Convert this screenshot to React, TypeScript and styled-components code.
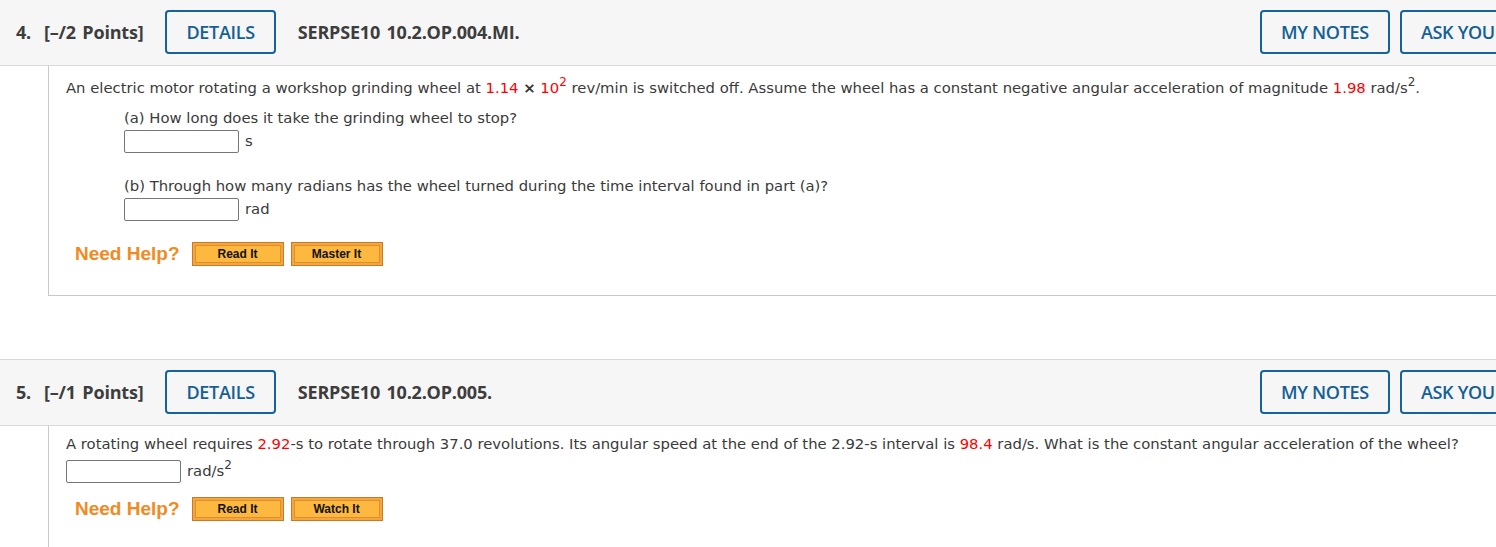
import React from "react";
import styled, { createGlobalStyle } from "styled-components";

const GlobalStyle = createGlobalStyle`
  html, body {
    margin: 0;
    padding: 0;
    background: #ffffff;
    overflow: hidden;
  }
  body {
    font-family: "DejaVu Sans", Verdana, sans-serif;
    color: #3a3a3a;
  }
`;

const Page = styled.div`
  width: 1496px;
  height: 547px;
  overflow: hidden;
`;

const Question = styled.section<{ $gap?: boolean }>`
  margin-top: ${(p) => (p.$gap ? "63px" : "0")};
`;

const Header = styled.div<{ $topLine?: boolean }>`
  display: flex;
  align-items: center;
  height: 44px;
  padding: 10px 0 11px 16px;
  background: #f6f6f6;
  border-top: ${(p) => (p.$topLine ? "1px solid #d9d9d9" : "none")};
  border-bottom: 1px solid #d9d9d9;
  font-family: "Open Sans", "Noto Sans", sans-serif;
  white-space: nowrap;
`;

const Title = styled.span`
  font-size: 18px;
  font-weight: 700;
  color: #3d3d3d;
  letter-spacing: -0.2px;
  word-spacing: 2px;
`;

const OutlineButton = styled.button`
  box-sizing: border-box;
  height: 44px;
  padding: 0 19px;
  border: 2px solid #15639c;
  border-radius: 4px;
  background: #f6f6f6;
  color: #135f96;
  font-family: "Open Sans", "Noto Sans", sans-serif;
  font-size: 18px;
  font-weight: 600;
  letter-spacing: -0.3px;
  flex-shrink: 0;
`;

const DetailsButton = styled(OutlineButton)`
  margin: 0 22px 0 22px;
`;

const Spacer = styled.div`
  flex: 1;
`;

const RightButtons = styled.div`
  display: flex;
  gap: 10px;
  margin-right: -112px;
`;

const Body = styled.div<{ $height: number; $top: number; $bottomLine?: boolean }>`
  height: ${(p) => p.$height}px;
  margin-left: 48px;
  padding: ${(p) => p.$top}px 0 0 17px;
  border-left: 1px solid #c8c8c8;
  border-bottom: ${(p) => (p.$bottomLine ? "1px solid #c8c8c8" : "none")};
  font-size: 14.8px;
  line-height: 22px;
`;

const Line = styled.div`
  white-space: nowrap;
`;

const Red = styled.span`
  color: #ff0000;
`;

const Times = styled.span`
  font-weight: 700;
  color: #333;
`;

const Sup = styled.sup`
  font-size: 12px;
  line-height: 0;
  vertical-align: 7px;
`;

const Part = styled.div<{ $top: number }>`
  margin-left: 58px;
  margin-top: ${(p) => p.$top}px;
`;

const AnswerRow = styled.div<{ $top?: number }>`
  display: flex;
  align-items: center;
  gap: 6px;
  margin-top: ${(p) => p.$top ?? 0}px;
  height: 24px;
`;

const AnswerInput = styled.input`
  box-sizing: border-box;
  width: 115px;
  height: 23px;
  border: 1px solid #767676;
  border-radius: 2px;
  background: #fff;
  margin: 0;
`;

const Unit = styled.span`
  font-size: 14.8px;
`;

const HelpRow = styled.div<{ $top: number }>`
  display: flex;
  align-items: center;
  margin: ${(p) => p.$top}px 0 0 9px;
  gap: 7px;
`;

const NeedHelp = styled.span`
  font-family: "Liberation Sans", Arial, sans-serif;
  font-size: 19px;
  font-weight: 700;
  color: #f28a1f;
  margin-right: 5px;
`;

const HelpButton = styled.button`
  box-sizing: border-box;
  width: 92px;
  height: 24px;
  padding: 0;
  border: 1px solid #c67a2a;
  background: #fdb840;
  box-shadow: inset 0 0 0 2px #f5a53a, inset 0 0 0 3px #dc8f2c;
  font-family: "Liberation Sans", Arial, sans-serif;
  font-size: 12px;
  font-weight: 700;
  color: #111;
`;

export default function App() {
  return (
    <Page>
      <GlobalStyle />
      <Question>
        <Header>
          <Title>4.&nbsp; [–/2 Points]</Title>
          <DetailsButton>DETAILS</DetailsButton>
          <Title>SERPSE10 10.2.OP.004.MI.</Title>
          <Spacer />
          <RightButtons>
            <OutlineButton>MY NOTES</OutlineButton>
            <OutlineButton>ASK YOUR TEACHER</OutlineButton>
          </RightButtons>
        </Header>
        <Body $height={218} $top={11} $bottomLine>
          <Line>
            An electric motor rotating a workshop grinding wheel at <Red>1.14</Red> <Times>×</Times>{" "}
            <Red>
              10<Sup>2</Sup>
            </Red>{" "}
            rev/min is switched off. Assume the wheel has a constant negative angular acceleration of
            magnitude <Red>1.98</Red> rad/s<Sup>2</Sup>.
          </Line>
          <Part $top={8}>
            <Line>(a) How long does it take the grinding wheel to stop?</Line>
            <AnswerRow>
              <AnswerInput type="text" />
              <Unit>s</Unit>
            </AnswerRow>
          </Part>
          <Part $top={22}>
            <Line>(b) Through how many radians has the wheel turned during the time interval found in part (a)?</Line>
            <AnswerRow>
              <AnswerInput type="text" />
              <Unit>rad</Unit>
            </AnswerRow>
          </Part>
          <HelpRow $top={21}>
            <NeedHelp>Need Help?</NeedHelp>
            <HelpButton>Read It</HelpButton>
            <HelpButton>Master It</HelpButton>
          </HelpRow>
        </Body>
      </Question>
      <Question $gap>
        <Header $topLine>
          <Title>5.&nbsp; [–/1 Points]</Title>
          <DetailsButton>DETAILS</DetailsButton>
          <Title>SERPSE10 10.2.OP.005.</Title>
          <Spacer />
          <RightButtons>
            <OutlineButton>MY NOTES</OutlineButton>
            <OutlineButton>ASK YOUR TEACHER</OutlineButton>
          </RightButtons>
        </Header>
        <Body $height={130} $top={7}>
          <Line>
            A rotating wheel requires <Red>2.92</Red>-s to rotate through 37.0 revolutions. Its angular speed at
            the end of the 2.92-s interval is <Red>98.4</Red> rad/s. What is the constant angular acceleration
            of the wheel?
          </Line>
          <AnswerRow $top={4}>
            <AnswerInput type="text" />
            <Unit>
              rad/s<Sup>2</Sup>
            </Unit>
          </AnswerRow>
          <HelpRow $top={14}>
            <NeedHelp>Need Help?</NeedHelp>
            <HelpButton>Read It</HelpButton>
            <HelpButton>Watch It</HelpButton>
          </HelpRow>
        </Body>
      </Question>
    </Page>
  );
}
